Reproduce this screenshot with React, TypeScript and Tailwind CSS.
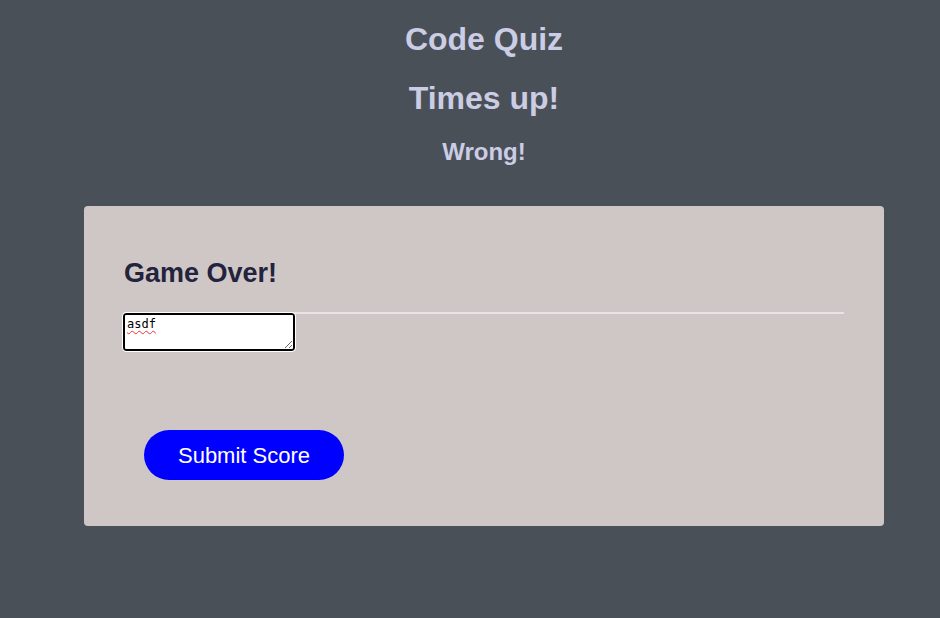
export default function App() {
  return (
    <div className="min-h-[618px] bg-[#4a5058] font-['Liberation_Sans',Arial,sans-serif] pt-[21px] pb-[92px]">
      <div className="ml-[84px] w-[800px]">
        <header className="flex flex-col items-center text-[#cbcde4] font-bold">
          <h1 className="text-[32px] leading-[37px]">Code Quiz</h1>
          <h1 className="mt-[22px] text-[32px] leading-[37px]">Times up!</h1>
          <h2 className="mt-[21px] text-[24px] leading-[28px]">Wrong!</h2>
        </header>

        <main className="mt-[40px] h-[320px] rounded-[4px] bg-[#cfc7c6] px-[40px] pt-[52px]">
          <h3 className="text-[27px] leading-[31px] font-bold text-[#23233d]">Game Over!</h3>
          <hr className="mt-[23px] border-0 border-t-2 border-[#e6e4e4]" />
          <div className="-ml-px -mt-px">
            <textarea
              defaultValue="asdf"
              className="block h-[38px] w-[172px] resize rounded-[3px] border-2 border-black bg-white px-[2px] pt-[2px] pb-0 font-['DejaVu_Sans_Mono',monospace] text-[12px] leading-[15px] text-black underline decoration-wavy decoration-red-500 decoration-1 underline-offset-2 outline outline-1 outline-white"
            />
          </div>
          <button className="mt-[79px] ml-[20px] flex h-[50px] w-[200px] items-center justify-center rounded-full bg-[#0000ff] text-[22px] text-white">
            Submit Score
          </button>
        </main>
      </div>
    </div>
  );
}
